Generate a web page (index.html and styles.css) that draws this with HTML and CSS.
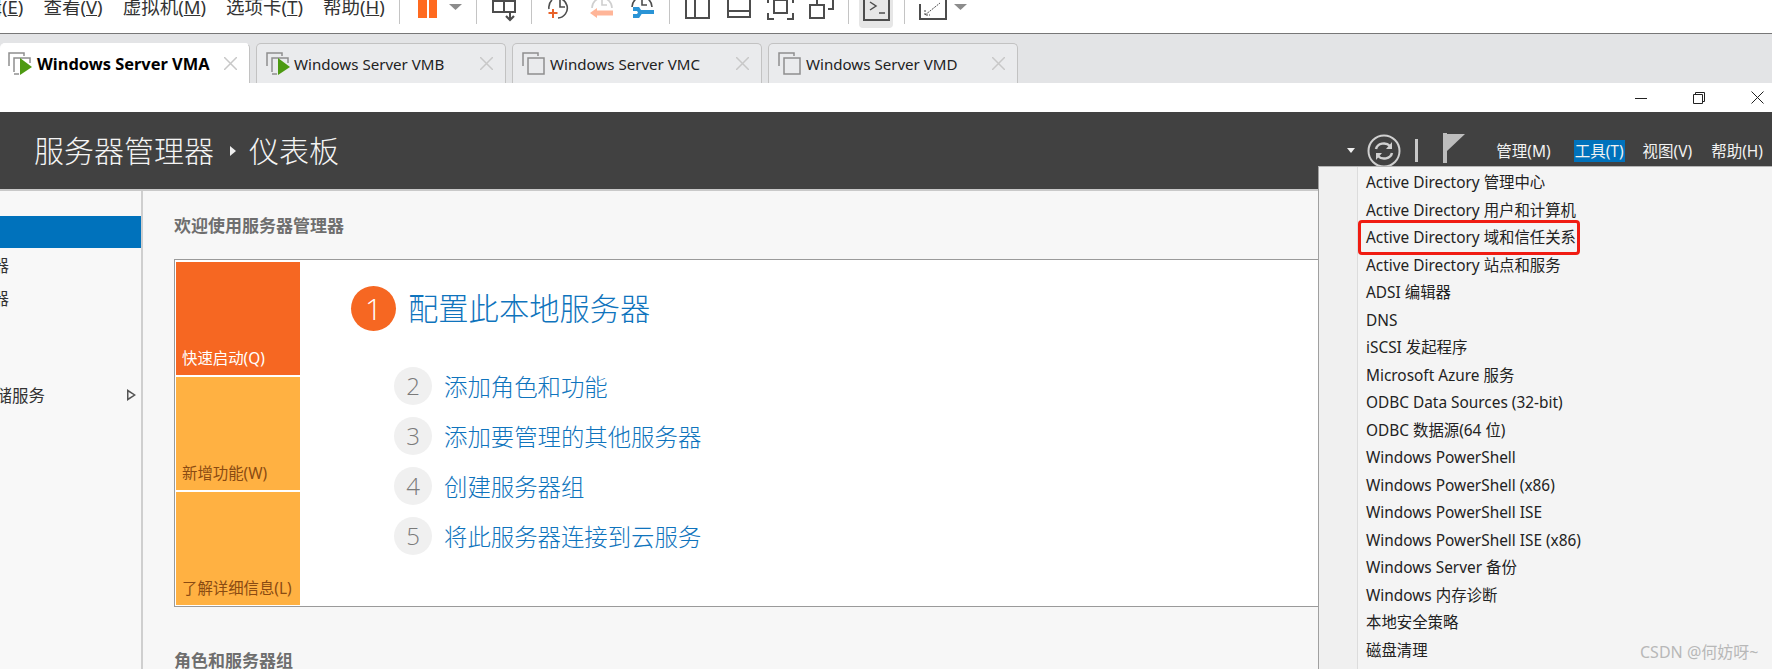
FILE: index.html
```html
<!DOCTYPE html>
<html lang="zh-CN">
<head>
<meta charset="utf-8">
<title>服务器管理器</title>
<link rel="stylesheet" href="styles.css">
</head>
<body>
<div class="page">
  <div class="toolbar">
    <nav class="vm-menu">
      <span>编辑(<u>E</u>)</span><span>查看(<u>V</u>)</span><span>虚拟机(<u>M</u>)</span><span>选项卡(<u>T</u>)</span><span>帮助(<u>H</u>)</span>
    </nav>
    <i class="sep s1"></i>
    <svg class="ic pause" width="19" height="24" viewBox="0 0 19 24"><rect x="0" y="0" width="9" height="18" fill="#ff6a1f"/><rect x="11" y="0" width="8" height="18" fill="#ff6a1f"/></svg>
    <svg class="ic caret" width="13" height="24" viewBox="0 0 13 24"><path d="M0 4h13L6.500 10z" fill="#8c8c8c"/></svg>
    <i class="sep s2"></i>
    <svg class="ic snap" width="24" height="24" viewBox="0 0 24 24" fill="none" stroke="#4d4d4d" stroke-width="2"><path d="M1 1h22v11H1zM12 1v11M18 12v8"/><path d="M14 16l4 4 4-4" stroke-width="2.200"/></svg>
    <i class="sep s3"></i>
    <svg class="ic c1" width="23" height="24" viewBox="0 0 23 24" fill="none" stroke="#4d4d4d" stroke-width="1.600"><path d="M5 -1a10 10 0 1 1 5 19M1 9a10 10 0 0 1 3-9M12 0v7h5"/><path d="M0.500 13h9M5 9v9" stroke="#e8622a" stroke-width="2"/></svg>
    <svg class="ic c2" width="24" height="24" viewBox="0 0 24 24" fill="none" stroke="#cfcfcf" stroke-width="1.600"><path d="M2 8a10 10 0 1 1 20 0M12 0v5h5"/><path d="M23 13H7" stroke="#ffb598" stroke-width="5"/><path d="M0 13l7-5v10z" fill="#ffb598" stroke="none"/></svg>
    <svg class="ic c3" width="24" height="24" viewBox="0 0 24 24" fill="none" stroke="#4d4d4d" stroke-width="1.600"><path d="M2 7a10 10 0 1 1 20 0M12 0v5h5"/><path d="M3 9h5l2 3h14M3 16h5l2-3" stroke="#2a94d6" stroke-width="4"/></svg>
    <i class="sep s4"></i>
    <svg class="ic l1" width="25" height="24" viewBox="0 0 25 24" fill="none" stroke="#4d4d4d" stroke-width="2"><path d="M1 -2h23v20H1zM10 -2v20"/></svg>
    <svg class="ic l2" width="24" height="24" viewBox="0 0 24 24" fill="none" stroke="#4d4d4d" stroke-width="2"><path d="M1 -2h22v19H1zM1 11h22"/></svg>
    <svg class="ic l3" width="27" height="24" viewBox="0 0 27 24" fill="none" stroke="#4d4d4d" stroke-width="2"><path d="M7 0h13v13H7z"/><path d="M1 3V-2M26 3V-2M1 13v6h6M26 13v6h-6"/></svg>
    <svg class="ic l4" width="25" height="24" viewBox="0 0 25 24" fill="none" stroke="#4d4d4d" stroke-width="2"><path d="M1 5h14v13H1z"/><path d="M8 5V0M20 -2h4v11h-5"/></svg>
    <i class="sep s5"></i>
    <div class="term"><svg width="27" height="21" viewBox="0 0 27 21" fill="none" stroke="#4d4d4d" stroke-width="2"><path d="M1 -2v22h25V-2"/><path d="M7 2l6 4-6 4M16 13h6" stroke-width="1.500"/></svg></div>
    <i class="sep s6"></i>
    <svg class="ic fs" width="28" height="24" viewBox="0 0 28 24" fill="none" stroke="#4d4d4d" stroke-width="2"><path d="M1 4v15h26V-2H12"/><path d="M6 15l15-12M6 10v5h5" stroke-width="1" stroke-dasharray="2 1"/></svg>
    <svg class="ic caret c-end" width="13" height="24" viewBox="0 0 13 24"><path d="M0 4h13L6.500 10z" fill="#8c8c8c"/></svg>
  </div>

  <div class="tabstrip">
    <div class="tab active">
      <svg class="tab-ic" width="24" height="24" viewBox="0 0 24 24" fill="none" stroke="#8f8f8f" stroke-width="1.500"><path d="M1 14V1h15v3M6 20V6h16v5"/><path d="M6 22h5"/><path d="M12 6l12 9-12 8z" fill="#4d9a12" stroke="none"/></svg>
      <span class="tab-name">Windows Server VMA</span>
      <svg class="tab-x" width="13" height="13" viewBox="0 0 13 13"><path d="M0 0l13 13M13 0L0 13" stroke="#c8c8c8" stroke-width="1.500"/></svg>
    </div>
    <div class="tab">
      <svg class="tab-ic" width="24" height="24" viewBox="0 0 24 24" fill="none" stroke="#8f8f8f" stroke-width="1.500"><path d="M1 14V1h15v3M6 20V6h16v5"/><path d="M6 22h5"/><path d="M12 6l12 9-12 8z" fill="#4d9a12" stroke="none"/></svg>
      <span class="tab-name">Windows Server VMB</span>
      <svg class="tab-x" width="13" height="13" viewBox="0 0 13 13"><path d="M0 0l13 13M13 0L0 13" stroke="#c8c8c8" stroke-width="1.500"/></svg>
    </div>
    <div class="tab">
      <svg class="tab-ic" width="24" height="24" viewBox="0 0 24 24" fill="none" stroke="#8f8f8f" stroke-width="1.500"><path d="M1 14V1h15v3M6 6h16v16H6z"/></svg>
      <span class="tab-name">Windows Server VMC</span>
      <svg class="tab-x" width="13" height="13" viewBox="0 0 13 13"><path d="M0 0l13 13M13 0L0 13" stroke="#c8c8c8" stroke-width="1.500"/></svg>
    </div>
    <div class="tab">
      <svg class="tab-ic" width="24" height="24" viewBox="0 0 24 24" fill="none" stroke="#8f8f8f" stroke-width="1.500"><path d="M1 14V1h15v3M6 6h16v16H6z"/></svg>
      <span class="tab-name">Windows Server VMD</span>
      <svg class="tab-x" width="13" height="13" viewBox="0 0 13 13"><path d="M0 0l13 13M13 0L0 13" stroke="#c8c8c8" stroke-width="1.500"/></svg>
    </div>
  </div>

  <div class="winbar">
    <svg class="wc" width="12" height="12" viewBox="0 0 12 12"><path d="M0 6.500h12" stroke="#222" stroke-width="1"/></svg>
    <svg class="wc" width="12" height="12" viewBox="0 0 12 12" fill="none" stroke="#222"><path d="M0.500 2.500h9v9h-9zM2.500 2.500v-2h9v9h-2"/></svg>
    <svg class="wc" width="13" height="13" viewBox="0 0 13 13"><path d="M0.500 0.500l12 12M12.500 0.500l-12 12" stroke="#222" stroke-width="1"/></svg>
  </div>

  <header class="sm-head">
    <h1 class="crumb">服务器管理器<i class="crumb-arrow"></i>仪表板</h1>
    <div class="head-tools">
      <i class="head-caret"></i>
      <svg class="refresh" width="34" height="34" viewBox="0 0 34 34" fill="none" stroke="#d0d0d0"><circle cx="17" cy="17" r="15.500" stroke-width="2"/><path d="M9 15a8 7 0 0 1 14-3M25 19a8 7 0 0 1-14 3" stroke-width="2.500"/><path d="M25 8v7h-6zM9 26v-7h6z" fill="#d0d0d0" stroke="none"/></svg>
      <i class="head-sep"></i>
      <svg class="flag" width="22" height="30" viewBox="0 0 22 30"><rect x="0" y="0" width="4" height="30" fill="#bdbdbd"/><path d="M4 1h18L4 18z" fill="#bdbdbd"/></svg>
      <nav class="head-menu">
        <span>管理(M)</span><span class="on">工具(T)</span><span>视图(V)</span><span>帮助(H)</span>
      </nav>
    </div>
  </header>

  <div class="main">
    <aside class="side">
      <div class="side-item sel"></div>
      <div class="side-item"><span class="side-label">本地服务器</span></div>
      <div class="side-item"><span class="side-label">所有服务器</span></div>
      <div class="side-item files"><span class="side-label">文件和存储服务</span><i class="side-arrow"></i></div>
    </aside>
    <section class="content">
      <h2 class="sec-title">欢迎使用服务器管理器</h2>
      <div class="welcome">
        <div class="tiles">
          <div class="tile hot">快速启动(Q)</div>
          <div class="tile">新增功能(W)</div>
          <div class="tile">了解详细信息(L)</div>
        </div>
        <div class="steps">
          <div class="lead"><span class="num-hot">1</span><a class="lead-text">配置此本地服务器</a></div>
          <ol class="step-list">
            <li><span class="num">2</span><a>添加角色和功能</a></li>
            <li><span class="num">3</span><a>添加要管理的其他服务器</a></li>
            <li><span class="num">4</span><a>创建服务器组</a></li>
            <li><span class="num">5</span><a>将此服务器连接到云服务</a></li>
          </ol>
        </div>
      </div>
      <h2 class="sec-title second">角色和服务器组</h2>
    </section>
  </div>

  <ul class="tools-menu">
    <li>Active Directory 管理中心</li>
    <li>Active Directory 用户和计算机</li>
    <li class="marked">Active Directory 域和信任关系</li>
    <li>Active Directory 站点和服务</li>
    <li>ADSI 编辑器</li>
    <li>DNS</li>
    <li>iSCSI 发起程序</li>
    <li>Microsoft Azure 服务</li>
    <li>ODBC Data Sources (32-bit)</li>
    <li>ODBC 数据源(64 位)</li>
    <li>Windows PowerShell</li>
    <li>Windows PowerShell (x86)</li>
    <li>Windows PowerShell ISE</li>
    <li>Windows PowerShell ISE (x86)</li>
    <li>Windows Server 备份</li>
    <li>Windows 内存诊断</li>
    <li>本地安全策略</li>
    <li>磁盘清理</li>
  </ul>
  <div class="watermark">CSDN @何妨呀~</div>
</div>
</body>
</html>
```
FILE: styles.css
```css
* { box-sizing: border-box; }
html, body { margin: 0; padding: 0; }
body {
  font-family: "Noto Sans", "Noto Sans CJK SC", sans-serif;
  background: #fff;
  color: #222;
}
.page {
  position: relative;
  width: 1772px;
  height: 669px;
  overflow: hidden;
  display: flex;
  flex-direction: column;
}
.toolbar {
  height: 33px;
  flex: none;
  display: flex;
  align-items: flex-start;
  overflow: hidden;
  background: #fff;
}
.vm-menu {
  width: 399px;
  flex: none;
  display: flex;
  gap: 20px;
  margin-top: -6px;
  font-size: 18.500px;
  line-height: 26px;
  color: #333;
  white-space: nowrap;
  overflow: hidden;
}
.vm-menu span:first-child { margin-left: -35px; }
.sep { flex: none; display: block; width: 1px; height: 24px; background: #c4c4c4; }
.ic { flex: none; display: block; }
.pause { margin-left: 18px; }
.caret { margin-left: 12px; }
.s2 { margin-left: 14px; }
.snap { margin-left: 15px; }
.s3 { margin-left: 15px; }
.c1 { margin-left: 16px; }
.c2 { margin-left: 19px; }
.c3 { margin-left: 16px; }
.s4 { margin-left: 15px; }
.l1 { margin-left: 15px; }
.l2 { margin-left: 17px; }
.l3 { margin-left: 16px; }
.l4 { margin-left: 15px; }
.s5 { margin-left: 14px; }
.term {
  flex: none;
  width: 34px;
  height: 28px;
  margin-left: 10px;
  padding-left: 4px;
  background: #e6e6e6;
  border-radius: 0 0 4px 4px;
}
.term svg { display: block; }
.s6 { margin-left: 11px; }
.fs { margin-left: 14px; }
.c-end { margin-left: 7px; }

.tabstrip {
  height: 50px;
  flex: none;
  display: flex;
  gap: 6px;
  padding-top: 9px;
  background: #e3e4e6;
  border-top: 1px solid #777;
}
.tab {
  width: 250px;
  height: 40px;
  flex: none;
  display: flex;
  align-items: center;
  padding: 0 12px 0 9px;
  background: #eaebed;
  border: 1px solid #c2c2c2;
  border-bottom: 0;
  border-radius: 5px 5px 0 0;
  font-size: 15.100px;
  color: #222;
}
.tab-ic { flex: none; margin-right: 4px; }
.tab-name { flex: 1; white-space: nowrap; }
.tab-x { flex: none; }
.tab.active {
  width: 250px;
  background: #fff;
  border-top-color: #fff;
  border-left: 0;
  font-size: 16.400px;
  font-weight: 700;
  color: #000;
  padding-left: 8px;
}
.tab.active .tab-ic { margin-right: 5px; }

.winbar {
  height: 29px;
  flex: none;
  display: flex;
  justify-content: flex-end;
  align-items: center;
  gap: 46px;
  padding-right: 8px;
  background: #fff;
}
.wc { display: block; }

.sm-head {
  height: 77px;
  flex: none;
  display: flex;
  align-items: center;
  justify-content: space-between;
  padding-left: 34px;
  background: #414141;
  color: #fff;
}
.crumb {
  margin: 0;
  font-size: 30px;
  line-height: 40px;
  font-weight: 300;
  display: flex;
  align-items: center;
  color: #f4f4f4;
}
.crumb-arrow {
  width: 0;
  height: 0;
  margin: 0 13px 0 16px;
  border-left: 6px solid #eee;
  border-top: 5px solid transparent;
  border-bottom: 5px solid transparent;
}
.head-tools { display: flex; align-items: center; }
.head-caret {
  width: 0;
  height: 0;
  margin-right: 12px;
  border-top: 5px solid #eee;
  border-left: 4px solid transparent;
  border-right: 4px solid transparent;
}
.refresh { display: block; }
.head-sep { width: 3px; height: 23px; margin: 0 25px 0 14px; background: #c8c8c8; }
.flag { display: block; margin: -6px 30px 0 0; }
.head-menu { display: flex; gap: 17px; padding-right: 8px; font-size: 15.500px; line-height: 22px; color: #f2f2f2; white-space: nowrap; }
.head-menu span { padding: 0 1px; }
.head-menu .on { margin-left: 5px; background: #0072bc; }

.main { flex: 1; display: flex; min-height: 0; border-top: 2px solid #c9c9c9; background: #f7f7f7; }
.side {
  width: 143px;
  flex: none;
  padding-top: 25px;
  background: #f8f8f8;
  border-right: 2px solid #cfcfcf;
  overflow: hidden;
  font-size: 16.500px;
  color: #333;
}
.side-item { height: 33px; position: relative; line-height: 35px; white-space: nowrap; }
.side-item.sel { height: 32px; background: #0072bc; }
.side-label { display: block; position: absolute; right: 132px; top: 0; }
.side-item.files { margin-top: 64px; }
.files .side-label { right: 96px; }
.side-arrow {
  position: absolute;
  left: 127px;
  top: 11px;
  width: 9px;
  height: 12px;
  background: #555;
  clip-path: polygon(0 0, 100% 50%, 0 100%, 0 0, 1.500px 3px, 1.500px 9px, 6.500px 6px, 1.500px 3px);
}
.content { flex: 1; padding: 23px 0 0 31px; min-width: 0; }
.sec-title { margin: 0; font-size: 17px; line-height: 24px; font-weight: 700; color: #6e6e6e; }
.sec-title.second { margin-top: 42px; }
.welcome {
  margin-top: 21px;
  height: 348px;
  display: flex;
  background: #fff;
  border: 1px solid #9a9a9a;
  padding: 2px 0 0 1px;
}
.tiles { width: 124px; flex: none; display: flex; flex-direction: column; gap: 2px; }
.tile {
  height: 113px;
  padding: 0 0 4px 6px;
  display: flex;
  align-items: flex-end;
  font-size: 15.400px;
  line-height: 24px;
  background: #ffb142;
  color: #8a4b12;
  white-space: nowrap;
}
.tile.hot { background: #f66722; color: #fff; }
.steps { padding: 24px 0 0 51px; }
.lead { display: flex; align-items: center; }
.num-hot {
  width: 45px;
  height: 45px;
  flex: none;
  border-radius: 50%;
  background: #f66722;
  color: #fff;
  font-family: "Open Sans", sans-serif;
  font-weight: 300;
  font-size: 30px;
  line-height: 45px;
  text-align: center;
}
.lead-text { margin-left: 12px; font-size: 30.300px; line-height: 45px; font-weight: 300; color: #0f74bd; }
.step-list { list-style: none; margin: 36px 0 0 43px; padding: 0; display: flex; flex-direction: column; gap: 12px; }
.step-list li { display: flex; align-items: center; height: 38px; }
.step-list a { margin-left: 12px; font-size: 23.400px; font-weight: 300; color: #0f74bd; }
.num {
  width: 38px;
  height: 38px;
  flex: none;
  border-radius: 50%;
  background: #f0f0f0;
  color: #7a7a7a;
  font-family: "Open Sans", sans-serif;
  font-weight: 300;
  font-size: 24px;
  line-height: 38px;
  text-align: center;
}

.tools-menu {
  position: absolute;
  left: 1318px;
  top: 166px;
  width: 454px;
  height: 503px;
  margin: 0;
  padding: 2px 0 0 47px;
  list-style: none;
  background: linear-gradient(to right, #f0f0f0 38px, #dcdcdc 38px, #dcdcdc 39px, #f4f4f4 39px);
  border-top: 1px solid #b5b5b5;
  border-left: 1px solid #a0a0a0;
  font-size: 15.400px;
  color: #222;
}
.tools-menu li { height: 27.500px; line-height: 27.500px; white-space: nowrap; position: relative; }
.tools-menu .marked::after {
  content: "";
  position: absolute;
  box-sizing: border-box;
  left: -8px;
  top: -4px;
  width: 222px;
  height: 35px;
  border: 3px solid #f01c12;
  border-radius: 4px;
}
.watermark {
  position: absolute;
  left: 1640px;
  top: 641px;
  font-size: 16px;
  line-height: 22px;
  color: #b8b8b8;
  white-space: nowrap;
}
```
